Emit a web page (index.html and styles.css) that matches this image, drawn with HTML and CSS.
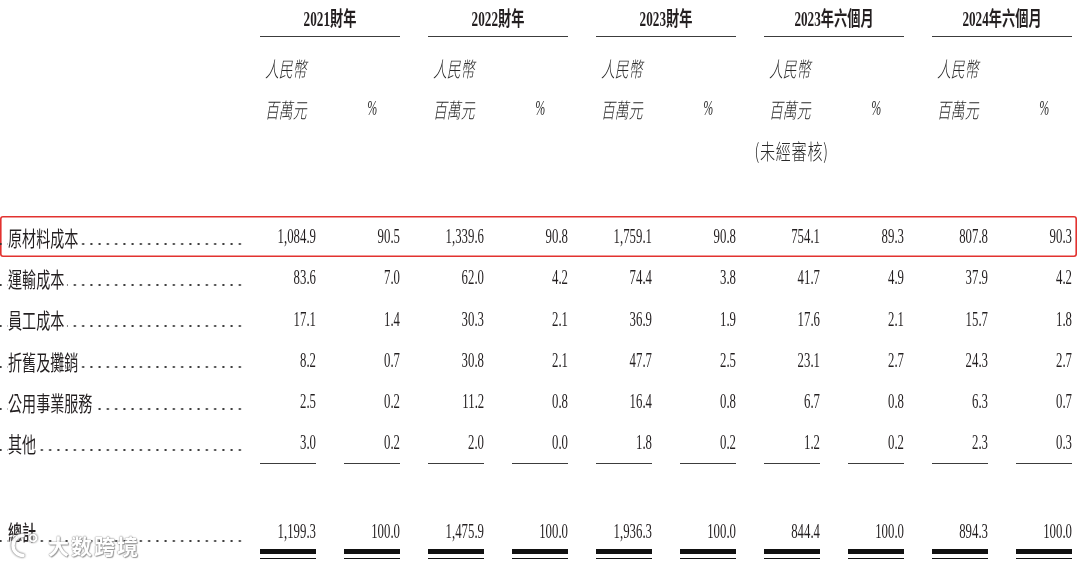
FILE: index.html
```html
<!DOCTYPE html>
<html lang="zh-Hant">
<head>
<meta charset="utf-8">
<title>成本明細</title>
<link rel="stylesheet" href="styles.css">
</head>
<body>
<div class="sheet">
  <div class="head">
    <div class="head-gap"></div>
    <div class="groups">
      <div class="group">
        <div class="gtitle"><span class="n">2021財年</span></div>
        <div class="sub">
          <div class="unit"><span class="n">人民幣</span></div><div></div>
          <div class="unit"><span class="n">百萬元</span></div><div class="pct"><span class="n">%</span></div>
        </div>
      </div>
      <div class="group">
        <div class="gtitle"><span class="n">2022財年</span></div>
        <div class="sub">
          <div class="unit"><span class="n">人民幣</span></div><div></div>
          <div class="unit"><span class="n">百萬元</span></div><div class="pct"><span class="n">%</span></div>
        </div>
      </div>
      <div class="group">
        <div class="gtitle"><span class="n">2023財年</span></div>
        <div class="sub">
          <div class="unit"><span class="n">人民幣</span></div><div></div>
          <div class="unit"><span class="n">百萬元</span></div><div class="pct"><span class="n">%</span></div>
        </div>
      </div>
      <div class="group">
        <div class="gtitle"><span class="n">2023年六個月</span></div>
        <div class="sub">
          <div class="unit"><span class="n">人民幣</span></div><div></div>
          <div class="unit"><span class="n">百萬元</span></div><div class="pct"><span class="n">%</span></div>
          <div class="note"><span class="n">(未經審核)</span></div><div></div>
        </div>
      </div>
      <div class="group">
        <div class="gtitle"><span class="n">2024年六個月</span></div>
        <div class="sub">
          <div class="unit"><span class="n">人民幣</span></div><div></div>
          <div class="unit"><span class="n">百萬元</span></div><div class="pct"><span class="n">%</span></div>
        </div>
      </div>
    </div>
  </div>

  <div class="row hl">
    <div class="label"><span class="n">原材料成本</span></div>
    <div class="cells">
      <div><span class="n">1,084.9</span></div><div><span class="n">90.5</span></div>
      <div><span class="n">1,339.6</span></div><div><span class="n">90.8</span></div>
      <div><span class="n">1,759.1</span></div><div><span class="n">90.8</span></div>
      <div><span class="n">754.1</span></div><div><span class="n">89.3</span></div>
      <div><span class="n">807.8</span></div><div><span class="n">90.3</span></div>
    </div>
  </div>
  <div class="row">
    <div class="label"><span class="n">運輸成本</span></div>
    <div class="cells">
      <div><span class="n">83.6</span></div><div><span class="n">7.0</span></div>
      <div><span class="n">62.0</span></div><div><span class="n">4.2</span></div>
      <div><span class="n">74.4</span></div><div><span class="n">3.8</span></div>
      <div><span class="n">41.7</span></div><div><span class="n">4.9</span></div>
      <div><span class="n">37.9</span></div><div><span class="n">4.2</span></div>
    </div>
  </div>
  <div class="row">
    <div class="label"><span class="n">員工成本</span></div>
    <div class="cells">
      <div><span class="n">17.1</span></div><div><span class="n">1.4</span></div>
      <div><span class="n">30.3</span></div><div><span class="n">2.1</span></div>
      <div><span class="n">36.9</span></div><div><span class="n">1.9</span></div>
      <div><span class="n">17.6</span></div><div><span class="n">2.1</span></div>
      <div><span class="n">15.7</span></div><div><span class="n">1.8</span></div>
    </div>
  </div>
  <div class="row">
    <div class="label"><span class="n">折舊及攤銷</span></div>
    <div class="cells">
      <div><span class="n">8.2</span></div><div><span class="n">0.7</span></div>
      <div><span class="n">30.8</span></div><div><span class="n">2.1</span></div>
      <div><span class="n">47.7</span></div><div><span class="n">2.5</span></div>
      <div><span class="n">23.1</span></div><div><span class="n">2.7</span></div>
      <div><span class="n">24.3</span></div><div><span class="n">2.7</span></div>
    </div>
  </div>
  <div class="row">
    <div class="label"><span class="n">公用事業服務</span></div>
    <div class="cells">
      <div><span class="n">2.5</span></div><div><span class="n">0.2</span></div>
      <div><span class="n">11.2</span></div><div><span class="n">0.8</span></div>
      <div><span class="n">16.4</span></div><div><span class="n">0.8</span></div>
      <div><span class="n">6.7</span></div><div><span class="n">0.8</span></div>
      <div><span class="n">6.3</span></div><div><span class="n">0.7</span></div>
    </div>
  </div>
  <div class="row sub-last">
    <div class="label"><span class="n">其他</span></div>
    <div class="cells">
      <div><span class="n">3.0</span></div><div><span class="n">0.2</span></div>
      <div><span class="n">2.0</span></div><div><span class="n">0.0</span></div>
      <div><span class="n">1.8</span></div><div><span class="n">0.2</span></div>
      <div><span class="n">1.2</span></div><div><span class="n">0.2</span></div>
      <div><span class="n">2.3</span></div><div><span class="n">0.3</span></div>
    </div>
  </div>
  <div class="row tot">
    <div class="label"><span class="n">總計</span></div>
    <div class="cells">
      <div><span class="n">1,199.3</span></div><div><span class="n">100.0</span></div>
      <div><span class="n">1,475.9</span></div><div><span class="n">100.0</span></div>
      <div><span class="n">1,936.3</span></div><div><span class="n">100.0</span></div>
      <div><span class="n">844.4</span></div><div><span class="n">100.0</span></div>
      <div><span class="n">894.3</span></div><div><span class="n">100.0</span></div>
    </div>
  </div>

  <div class="watermark">
    <svg class="wm-logo" width="32" height="28" viewBox="0 0 32 28">
      <path d="M15 4.5 A10 10 0 1 0 15 24.5" fill="none" stroke="#fff" stroke-width="3.4" stroke-linecap="round"/>
      <circle cx="25" cy="7" r="3.4" fill="none" stroke="#fff" stroke-width="1.9"/>
    </svg>
    <span class="wm-text">大数跨境</span>
  </div>
</div>
</body>
</html>
```
FILE: styles.css
```css
* { box-sizing: border-box; }

body {
  margin: 0;
  background: #fff;
  color: #231f20;
  font-family: "Liberation Serif", "Noto Sans CJK TC", serif;
}

.sheet {
  position: relative;
  width: 1080px;
  height: 567px;
  overflow: hidden;
}

.n {
  display: inline-block;
  white-space: nowrap;
  flex: none;
}

/* ---------- header ---------- */
.head {
  display: flex;
  height: 216px;
}
.head-gap { width: 260px; flex: none; }

.groups {
  display: grid;
  grid-template-columns: repeat(5, 140px);
  column-gap: 28px;
  align-content: start;
}

.gtitle {
  height: 37px;
  padding-top: 2px;
  border-bottom: 1px solid #3c3c3c;
  display: flex;
  justify-content: center;
  align-items: center;
  font-weight: 700;
  font-size: 20px;
  line-height: 1;
}
.gtitle .n { transform: scaleX(.66); transform-origin: center; }

.sub {
  display: grid;
  grid-template-columns: 56px 56px;
  column-gap: 28px;
  grid-auto-rows: 41px;
  margin-top: 10px;
}
.sub > div { display: flex; align-items: center; }

.unit {
  padding-left: 5px;
  font-family: "Noto Sans CJK TC", sans-serif;
  font-style: italic;
  font-weight: 300;
  font-size: 21px;
  color: #2a2a2a;
}
.unit .n { transform: scaleX(.66); transform-origin: left center; }

.pct {
  justify-content: center;
  font-style: italic;
  font-size: 20px;
  color: #2a2a2a;
}
.pct .n { transform: scaleX(.6); transform-origin: center; }

.note {
  justify-content: center;
  font-family: "Noto Sans CJK TC", sans-serif;
  font-weight: 300;
  font-size: 21px;
  color: #2a2a2a;
}
.note .n { transform: scaleX(.72); transform-origin: center; letter-spacing: 1px; }

/* ---------- body rows ---------- */
.row {
  display: flex;
  width: 1077px;
  height: 41.3px;
}
.row.hl {
  box-shadow: inset 0 0 0 1.6px #e2322f;
  border-radius: 3px;
}

.label {
  flex: none;
  width: 244px;
  margin-right: 16px;
  padding-left: 8px;
  display: flex;
  align-items: center;
  font-family: "Noto Sans CJK TC", sans-serif;
  font-size: 21px;
  background-image: radial-gradient(circle, #333 0.85px, transparent 1.3px);
  background-size: 8.26px 4px;
  background-repeat: repeat-x;
  background-position: right 0 top 25.5px;
}
.label .n {
  transform: scaleX(.67);
  transform-origin: left center;
  background: #fff;
  padding-right: 4px;
}

.cells {
  display: grid;
  grid-template-columns: repeat(10, 56px);
  column-gap: 28px;
}
.cells > div {
  display: flex;
  justify-content: flex-end;
  align-items: center;
  font-size: 20px;
}
.cells .n { transform: scaleX(.64); transform-origin: right center; }

.sub-last .cells > div { border-bottom: 1px solid #3c3c3c; }

.row.tot {
  height: 46px;
  margin-top: 49.2px;
}
.row.tot .label {
  padding-bottom: 9px;
  background-position: right 0 top 26px;
}
.row.tot .label .n { font-weight: 500; }
.row.tot .cells > div {
  padding-bottom: 9px;
  background:
    linear-gradient(#111, #111) left bottom / 100% 1.2px no-repeat,
    linear-gradient(#111, #111) left bottom 5px / 100% 5px no-repeat;
}

/* ---------- watermark overlay ---------- */
.watermark {
  position: absolute;
  left: 8px;
  top: 530px;
  display: flex;
  align-items: center;
  gap: 8px;
  opacity: .92;
}
.wm-logo { filter: drop-shadow(0 0 1.2px #8a8a8a) drop-shadow(0 0 .6px #999); }
.wm-text {
  font-family: "Noto Sans CJK SC", sans-serif;
  font-weight: 700;
  font-size: 21px;
  letter-spacing: 2px;
  color: #fff;
  text-shadow: 0 0 1.5px #7a7a7a, 0 0 1px #8a8a8a, 1px 1px 1px #9a9a9a;
}
```
